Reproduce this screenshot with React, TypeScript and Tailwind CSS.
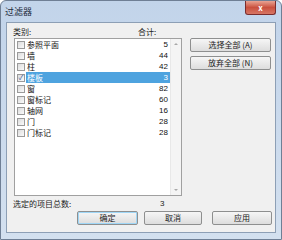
const rows = [
  { name: "参照平面", count: 5 },
  { name: "墙", count: 44 },
  { name: "柱", count: 42 },
  { name: "楼板", count: 3, checked: true },
  { name: "窗", count: 82 },
  { name: "窗标记", count: 60 },
  { name: "轴网", count: 16 },
  { name: "门", count: 28 },
  { name: "门标记", count: 28 },
];

const font = { fontFamily: '"Noto Sans CJK SC", "Liberation Sans", sans-serif' };

const Btn = ({ label, className = "" }: { label: string; className?: string }) => (
  <div
    className={`h-[14px] flex items-center justify-center rounded-[2px] border border-[#8e8f8f] bg-gradient-to-b from-[#f6f6f6] to-[#dddddd] text-[8px] leading-none text-[#222] ${className}`}
  >
    {label}
  </div>
);

export default function App() {
  return (
    <div
      className="w-[282px] h-[240px] bg-gradient-to-b from-[#c2d4ea] to-[#d3e0ef] relative overflow-hidden rounded-t-[6px] border border-[#6f7f95]"
      style={font}
    >
      {/* title bar */}
      <div className="h-[21px] flex items-center pl-[4px] text-[9px] text-[#1e2b3c]">过滤器</div>
      <div className="absolute top-0 right-[5px] w-[31px] h-[14px] rounded-b-[3px] border border-t-0 border-[#7a2d2d] bg-gradient-to-b from-[#e8a393] via-[#c9503e] to-[#d77664] flex items-center justify-center text-white text-[8px] font-bold">
        x
      </div>

      {/* client area */}
      <div className="mx-[5px] h-[211px] bg-[#f0f0f0] border border-[#8d9fb5] flex flex-col text-[#222]">
        <div className="flex pt-[3px] h-[15px] text-[8px] leading-[11px]">
          <span className="pl-[6px] w-[131px]">类别:</span>
          <span>合计:</span>
        </div>

        <div className="flex">
          {/* list */}
          <div className="ml-[7px] w-[168px] h-[158px] border border-[#a0a0a0] bg-white flex">
            <div className="flex-1 flex flex-col">
              {rows.map((r) => (
                <div key={r.name} className="h-[11px] flex items-center">
                  <div className="ml-[2px] w-[8px] h-[8px] border border-[#9a9a9a] bg-gradient-to-br from-[#dcdcdc] to-[#fafafa] flex items-center justify-center text-[7px] leading-none text-[#3a5a9a]">
                    {r.checked ? "✓" : ""}
                  </div>
                  <div
                    className={`ml-[1px] flex-1 h-[11px] flex items-center justify-between pl-[1px] pr-[2px] text-[8px] leading-none ${
                      r.checked ? "bg-[#4ea3df] text-white" : "text-[#111]"
                    }`}
                  >
                    <span>{r.name}</span>
                    <span style={{ fontFamily: '"Liberation Sans", sans-serif' }}>{r.count}</span>
                  </div>
                </div>
              ))}
            </div>
            {/* scrollbar */}
            <div className="w-[11px] bg-[#f4f4f4] border-l border-[#e8e8e8] flex flex-col justify-between items-center py-[4px]">
              <div className="w-0 h-0 border-l-[2px] border-r-[2px] border-b-[2px] border-l-transparent border-r-transparent border-b-[#a8a8a8]" />
              <div className="w-0 h-0 border-l-[2px] border-r-[2px] border-t-[2px] border-l-transparent border-r-transparent border-t-[#a8a8a8]" />
            </div>
          </div>

          {/* side buttons */}
          <div className="ml-[8px] w-[81px] flex flex-col gap-[4px]">
            <Btn label="选择全部 (A)" />
            <Btn label="放弃全部 (N)" />
          </div>
        </div>

        <div className="flex h-[15px] items-center text-[8px] leading-none">
          <span className="pl-[6px] w-[153px]">选定的项目总数:</span>
          <span style={{ fontFamily: '"Liberation Sans", sans-serif' }}>3</span>
        </div>

        <div className="flex pl-[70px] gap-[6px]">
          <Btn label="确定" className="w-[61px] border-[#3c7fb1] shadow-[inset_0_0_0_1px_#9fd6f6]" />
          <Btn label="取消" className="w-[58px]" />
          <Btn label="应用" className="w-[60px] ml-[4px]" />
        </div>
      </div>
    </div>
  );
}
